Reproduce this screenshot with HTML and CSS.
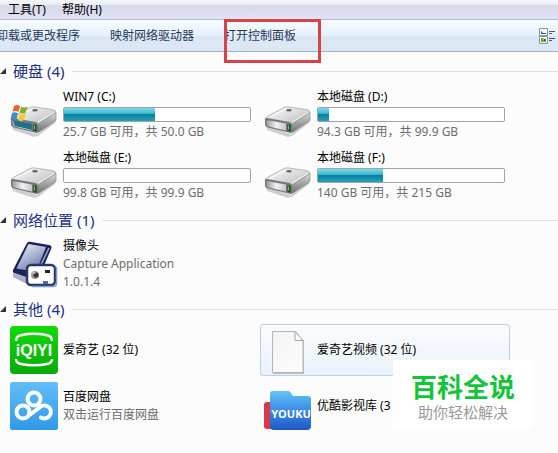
FILE: index.html
```html
<!DOCTYPE html>
<html lang="zh-CN">
<head>
    <meta charset="UTF-8">
    <meta name="viewport" content="width=device-width, initial-scale=1.0">
    <title>计算机</title>
    <link rel="stylesheet" href="styles.css">
</head>
<body>
    <!-- Shared drive icon -->
    <svg class="defs" aria-hidden="true">
        <defs>
            <linearGradient id="driveTop" x1="0" y1="0" x2="1" y2="1">
                <stop offset="0" stop-color="#fafafa"/>
                <stop offset="0.5" stop-color="#dcdcdc"/>
                <stop offset="1" stop-color="#b4b4b4"/>
            </linearGradient>
            <linearGradient id="driveSide" x1="0" y1="0" x2="0" y2="1">
                <stop offset="0" stop-color="#d8d8d8"/>
                <stop offset="1" stop-color="#6e6e6e"/>
            </linearGradient>
            <linearGradient id="driveFront" x1="0" y1="0" x2="1" y2="0">
                <stop offset="0" stop-color="#9c9ca0"/>
                <stop offset="0.5" stop-color="#f2f2f6"/>
                <stop offset="1" stop-color="#c4c4cc"/>
            </linearGradient>
            <symbol id="drive" viewBox="0 0 48 48">
                <path d="M2 35l25 8 20-16-2 5-17 13-4 1-21-7z" fill="#000" opacity="0.18"/>
                <path d="M1 28.500Q1 26.500 4 25L20 16.500Q22 15.500 25 16L42 18.500Q46 19 46 21.500L28 34 2 30z" fill="url(#driveTop)" stroke="#a0a0a0" stroke-width="0.700"/>
                <path d="M46 21.500V28Q46 30 44 31L29 41Q27 42 25.500 41.500L28 33z" fill="url(#driveSide)" stroke="#888" stroke-width="0.600"/>
                <path d="M1 28.500Q1 26.800 3 27L25.500 31Q28 31.500 28 34V39.500Q28 42 25.500 41.700L4 36.500Q1 35.800 1 33z" fill="#77777b"/>
                <path d="M2.500 29L22 32.500V39.500L4.500 35.500Q2.500 35 2.500 33z" fill="url(#driveFront)"/>
                <path d="M23.500 33.200l3 .6v6.800l-3-.7z" fill="#164e20"/>
                <path d="M24.500 34.500v4" stroke="#6fd65c"/>
                <ellipse cx="25" cy="19.300" rx="2.800" ry="1.200" fill="#666"/>
                <path d="M5 26.500L22 18M28 31L44 21.500" stroke="#fff" fill="none" opacity="0.8"/>
            </symbol>
        </defs>
    </svg>

    <nav class="menubar">
        <button type="button">工具(T)</button>
        <button type="button">帮助(H)</button>
    </nav>

    <div class="toolbar">
        <div class="commands">
            <button type="button">卸载或更改程序</button>
            <button type="button">映射网络驱动器</button>
            <button type="button" class="marked">打开控制面板</button>
        </div>
        <button type="button" class="view" aria-label="更改视图">
            <svg width="18" height="16" viewBox="0 0 18 16">
                <path d="M.5.500h8v7h-8zM.5 8.500h8v7h-8z" fill="#fff" stroke="#8196a8"/>
                <path d="M2 5V3l2 2h3v1H2z" fill="#2d5d82"/>
                <path d="M2 10h2l1 2 2-2v4H2z" fill="#8b9c3a"/>
                <path d="M5 11h1v2H5z" fill="#24516f"/>
                <path d="M10 3.500h6M10 5.500h3M10 10.500h6M10 12.500h3" stroke="#4a5968"/>
            </svg>
        </button>
    </div>

    <main>
        <details class="group" open>
            <summary><svg class="arrow" viewBox="0 0 6 6"><path d="M6 0v6H0z"/></svg><h2>硬盘 (4)</h2></summary>
            <div class="tiles">
                <a class="tile drive" href="#">
                    <svg class="icon" viewBox="0 0 48 48">
                        <use href="#drive"/>
                        <path d="M3 29l19 3.500v6.500L5 35z" fill="#1d7188"/>
                        <path d="M4 15q4-2 6 .5L8.500 21q-3-2-6 0z" fill="#e8612c"/>
                        <path d="M11 15.500q3 2 6.500 0L15.500 22q-3 1.500-6-.5z" fill="#79b532"/>
                        <path d="M2 22q3-1.500 6 .5L6.500 28.500q-3-2-6 0z" fill="#3d8bd4"/>
                        <path d="M9.500 22.500q3 2 6 .5L14 29q-3 2-6 0z" fill="#f9c62b"/>
                    </svg>
                    <span class="text">
                        <span class="name">WIN7 (C:)</span>
                        <span class="bar"><span class="used" style="width: 49%"></span></span>
                        <span class="info">25.7 GB 可用，共 50.0 GB</span>
                    </span>
                </a>
                <a class="tile drive" href="#">
                    <svg class="icon"><use href="#drive"/></svg>
                    <span class="text">
                        <span class="name">本地磁盘 (D:)</span>
                        <span class="bar"><span class="used" style="width: 6%"></span></span>
                        <span class="info">94.3 GB 可用，共 99.9 GB</span>
                    </span>
                </a>
                <a class="tile drive" href="#">
                    <svg class="icon"><use href="#drive"/></svg>
                    <span class="text">
                        <span class="name">本地磁盘 (E:)</span>
                        <span class="bar"><span class="used" style="width: 0%"></span></span>
                        <span class="info">99.8 GB 可用，共 99.9 GB</span>
                    </span>
                </a>
                <a class="tile drive" href="#">
                    <svg class="icon"><use href="#drive"/></svg>
                    <span class="text">
                        <span class="name">本地磁盘 (F:)</span>
                        <span class="bar"><span class="used" style="width: 35%"></span></span>
                        <span class="info">140 GB 可用，共 215 GB</span>
                    </span>
                </a>
            </div>
        </details>

        <details class="group" open>
            <summary><svg class="arrow" viewBox="0 0 6 6"><path d="M6 0v6H0z"/></svg><h2>网络位置 (1)</h2></summary>
            <div class="tiles">
                <a class="tile" href="#">
                    <svg class="icon" viewBox="0 0 48 48">
                        <defs>
                            <linearGradient id="screen" x1="0" y1="0" x2="0.6" y2="1">
                                <stop offset="0" stop-color="#f4f6fb"/>
                                <stop offset="0.6" stop-color="#a3adcb"/>
                                <stop offset="1" stop-color="#6875a5"/>
                            </linearGradient>
                        </defs>
                        <path d="M3 33v4l14 7 4-5z" fill="#aab0cc"/>
                        <path d="M17 3Q18 1.500 20 1.800L39 5Q42 5.500 41.500 8L30 35 19 38 4 33Q2.500 32 3 30z" fill="#1b2459"/>
                        <path d="M18.500 4L36 7 26 32 6.500 28.500z" fill="url(#screen)"/>
                        <path d="M39 8L28 31" stroke="#9ba7d2" stroke-width="1.500"/>
                        <rect x="17" y="25" width="28" height="20" rx="4" fill="#fff" stroke="#26376f" stroke-width="2.500"/>
                        <path d="M46.500 27v16q0 3.500-3.500 3.500H22" fill="none" stroke="#7b9cc9" stroke-width="1.500"/>
                        <circle cx="25" cy="35" r="4" fill="#999"/>
                        <circle cx="26" cy="35" r="2.500" fill="#333"/>
                        <path d="M22.500 33h3" stroke="#eee"/>
                        <path d="M35 30h5v3h-5z" fill="#222"/>
                        <path d="M33 41h5v3h-5z" fill="#4a6ba5"/>
                    </svg>
                    <span class="text">
                        <span class="name">摄像头</span>
                        <span class="info">Capture Application</span>
                        <span class="info">1.0.1.4</span>
                    </span>
                </a>
            </div>
        </details>

        <details class="group" open>
            <summary><svg class="arrow" viewBox="0 0 6 6"><path d="M6 0v6H0z"/></svg><h2>其他 (4)</h2></summary>
            <div class="tiles">
                <a class="tile" href="#">
                    <svg class="icon" viewBox="0 0 48 48">
                        <defs>
                            <linearGradient id="green" x1="0" y1="0" x2="0" y2="1">
                                <stop offset="0" stop-color="#0fdc05"/>
                                <stop offset="1" stop-color="#08aa0c"/>
                            </linearGradient>
                        </defs>
                        <rect width="48" height="48" rx="4" fill="url(#green)"/>
                        <path d="M6 15Q6 10 11 9.200Q24 6.500 37 9.200Q42 10 42 15M6 33Q6 37 11 38Q24 40.500 37 38Q42 37 42 33" fill="none" stroke="#fff" stroke-width="2.500"/>
                        <text class="qiyi" x="24" y="30" text-anchor="middle">iQIYI</text>
                    </svg>
                    <span class="text">
                        <span class="name">爱奇艺 (32 位)</span>
                    </span>
                </a>
                <a class="tile selected" href="#">
                    <svg class="icon" viewBox="0 0 48 48">
                        <defs>
                            <linearGradient id="paper" x1="0" y1="0" x2="1" y2="1">
                                <stop offset="0" stop-color="#f3f3f3"/>
                                <stop offset="1" stop-color="#fdfdfd"/>
                            </linearGradient>
                        </defs>
                        <path d="M9 6H32l8 9v33H9z" fill="#000" opacity="0.2"/>
                        <path d="M8.500 5.500H31l8 9v32H8.500z" fill="url(#paper)" stroke="#b4b4b4"/>
                        <path d="M31 5.500l8 9H31z" fill="#fff" stroke="#a4a4a4"/>
                    </svg>
                    <span class="text">
                        <span class="name">爱奇艺视频 (32 位)</span>
                    </span>
                </a>
                <a class="tile" href="#">
                    <svg class="icon" viewBox="0 0 48 48">
                        <defs>
                            <linearGradient id="sky" x1="0" y1="0" x2="0" y2="1">
                                <stop offset="0" stop-color="#64bdf8"/>
                                <stop offset="1" stop-color="#2f9ae8"/>
                            </linearGradient>
                        </defs>
                        <rect width="48" height="48" rx="2" fill="url(#sky)"/>
                        <g fill="none" stroke="#fff" stroke-width="4" stroke-linecap="round">
                            <circle cx="24" cy="17" r="6.500"/>
                            <circle cx="13" cy="30" r="6.500"/>
                            <path d="M17.500 34.500L29.500 25.500A6.500 6.500 0 1 1 31 35.500"/>
                        </g>
                    </svg>
                    <span class="text">
                        <span class="name">百度网盘</span>
                        <span class="info">双击运行百度网盘</span>
                    </span>
                </a>
                <a class="tile" href="#">
                    <svg class="icon" viewBox="0 0 48 48">
                        <defs>
                            <linearGradient id="folder" x1="0" y1="0" x2="0" y2="1">
                                <stop offset="0" stop-color="#62c4f5"/>
                                <stop offset="0.5" stop-color="#3c8be6"/>
                                <stop offset="1" stop-color="#1f57c6"/>
                            </linearGradient>
                        </defs>
                        <rect y="20" width="12" height="27" rx="3" fill="#d93a48"/>
                        <path d="M6 12q0-3 3-3h15q2 0 3 2l2 3h15q3 0 3 3v27q0 4-4 4H10q-4 0-4-4z" fill="url(#folder)"/>
                        <text class="youku" x="27" y="36" text-anchor="middle">YOUKU</text>
                    </svg>
                    <span class="text">
                        <span class="name">优酷影视库 (3</span>
                    </span>
                </a>
            </div>
        </details>
    </main>

    <aside class="badge">
        <strong>百科全说</strong>
        <span>助你轻松解决</span>
    </aside>
</body>
</html>
```
FILE: styles.css
```css
body {
    font-family: 'Noto Sans', 'Noto Sans CJK SC', sans-serif;
    font-size: 12px;
    line-height: 16px;
    background-color: #fcfcfc;
    color: #000;
    margin: 0;
    position: relative;
}

.defs {
    position: absolute;
    width: 0;
    height: 0;
}

button {
    font: inherit;
    color: inherit;
    background: none;
    border: none;
    padding: 0;
    cursor: pointer;
    white-space: nowrap;
}

.menubar {
    display: flex;
    gap: 16px;
    height: 19px;
    padding: 0 8px;
    background: linear-gradient(#f3f5fa 0, #eceff7 4px, #d5daeb 6px, #e0e3f2 100%);
}

.toolbar {
    display: flex;
    align-items: center;
    justify-content: space-between;
    height: 31px;
    padding-right: 1px;
    color: #1e395b;
    background: linear-gradient(#f7fbfe, #e6f0fa 50%, #dbe6f4 51%, #dde8f5);
    border-top: 1px solid #b4bccb;
    border-bottom: 1px solid #a3afc6;
}

.commands {
    display: flex;
    gap: 30px;
    margin-left: -4px; /* bar is scrolled slightly to the left */
}

.view {
    display: flex;
}

.marked {
    position: relative;
}

/* red frame around the command */
.marked::after {
    content: "";
    position: absolute;
    left: 0;
    top: -9px;
    width: 91px;
    height: 38px;
    border: 3px solid #d8434a;
}

main {
    padding-top: 7px;
}

.group {
    margin-bottom: 4px;
}

summary {
    display: flex;
    align-items: center;
    height: 24px;
    margin-bottom: 3px;
    cursor: pointer;
}

summary::after {
    content: "";
    flex: 1;
    height: 1px;
    margin-left: 8px;
    background-color: #dfe2e6;
}

.arrow {
    width: 6px;
    height: 6px;
    margin-right: 7px;
    fill: #333;
}

h2 {
    margin: 0;
    font-size: 15px;
    font-weight: normal;
    line-height: 24px;
    color: #1e3287;
}

.tiles {
    display: grid;
    grid-template-columns: repeat(auto-fill, 250px);
    gap: 4px;
    padding-left: 6px;
}

.tile {
    display: flex;
    align-items: center;
    gap: 5px;
    box-sizing: border-box;
    min-height: 52px;
    padding: 1px 4px 1px 3px;
    border: 1px solid transparent;
    border-radius: 3px;
    color: inherit;
    text-decoration: none;
    line-height: 18px;
}

.tile.selected {
    border-color: #b8d0e8;
    background: linear-gradient(#fafcfe, #e9f1fb);
}

.icon {
    width: 48px;
    height: 48px;
    flex: none;
}

.text {
    display: flex;
    flex-direction: column;
    flex: 1;
    white-space: nowrap;
}

.info {
    color: #6d6d6d;
}

.drive {
    min-height: 57px;
    line-height: 16px;
}

.drive .text {
    gap: 2px;
}

.bar {
    display: flex;
    height: 13px;
    border: 1px solid #a3a3a3;
    border-radius: 2px;
    background-color: #fff;
}

.used {
    background: linear-gradient(#7fdcec 0, #35b3cb 45%, #0b7f9b 50%, #26a0bb 100%);
}

.qiyi {
    font: bold 16px 'Liberation Sans', sans-serif;
    fill: #fff;
}

.youku {
    font: bold 11px 'Open Sans', sans-serif;
    fill: #fff;
}

.badge {
    position: absolute;
    left: 393px;
    top: 360px;
    display: flex;
    flex-direction: column;
    align-items: center;
    box-sizing: border-box;
    width: 140px;
    height: 68px;
    padding-top: 13px;
    background-color: #fff;
}

.badge strong {
    font-size: 26px;
    font-weight: bold;
    line-height: 28px;
    color: #12c43a;
}

.badge span {
    font-size: 15px;
    line-height: 22px;
    color: #999;
}
```
